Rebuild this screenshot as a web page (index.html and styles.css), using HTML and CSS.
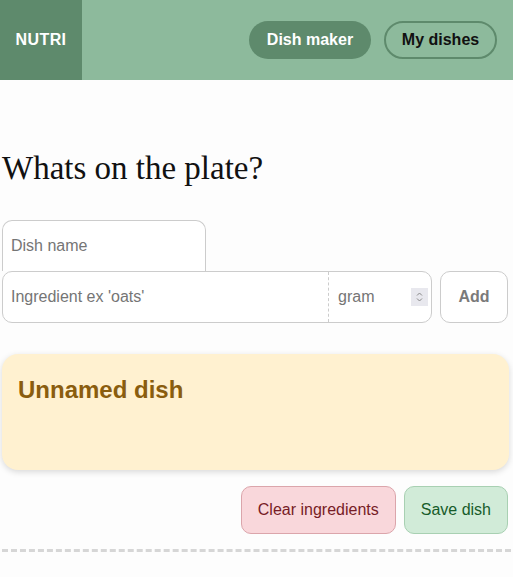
FILE: index.html
```html
<!DOCTYPE html>
<html>
<head>
<meta charset="utf-8">
<link rel="stylesheet" href="styles.css">
</head>
<body>
<header class="topbar">
  <div class="logo">NUTRI</div>
  <nav class="nav">
    <a class="pill pill-active">Dish maker</a>
    <a class="pill pill-outline">My dishes</a>
  </nav>
</header>
<main class="main">
  <h1 class="title">Whats on the plate?</h1>
  <form class="form">
    <input class="dish-name" type="text" placeholder="Dish name">
    <div class="ingredient-row">
      <div class="ingredient-box">
        <input class="ingredient" type="text" placeholder="Ingredient ex 'oats'">
        <div class="unit">
          <span class="unit-text">gram</span>
          <span class="spinner">
            <svg width="11" height="14" viewBox="0 0 11 14"><path d="M3 5.5 L5.5 3 L8 5.5" fill="none" stroke="#888" stroke-width="1"/><path d="M3 8.5 L5.5 11 L8 8.5" fill="none" stroke="#888" stroke-width="1"/></svg>
          </span>
        </div>
      </div>
      <button class="add" type="button">Add</button>
    </div>
  </form>
  <section class="card">
    <h2 class="card-title">Unnamed dish</h2>
  </section>
  <div class="actions">
    <button class="btn btn-clear" type="button">Clear ingredients</button>
    <button class="btn btn-save" type="button">Save dish</button>
  </div>
  <hr class="divider">
</main>
</body>
</html>
```
FILE: styles.css
```css
* { box-sizing: border-box; }
html, body { margin: 0; padding: 0; background: #fdfdfd; }
body { font-family: "Liberation Sans", Arial, sans-serif; color: #111; }

.topbar {
  height: 80px;
  background: #8dba9c;
  display: flex;
  align-items: center;
}
.logo {
  width: 82px;
  height: 80px;
  background: #5e8a6c;
  color: #fff;
  font-weight: bold;
  font-size: 16px;
  display: flex;
  align-items: center;
  justify-content: center;
  letter-spacing: 0.4px;
}
.nav {
  margin-left: auto;
  margin-right: 16px;
  display: flex;
  gap: 13px;
}
.pill {
  height: 38px;
  display: flex;
  align-items: center;
  justify-content: center;
  border-radius: 19px;
  font-weight: bold;
  font-size: 16px;
}
.pill-active {
  width: 122px;
  background: #5e8a6c;
  color: #fff;
}
.pill-outline {
  width: 113px;
  border: 2px solid #5e8a6c;
  color: #111;
}

.main {
  padding: 0 5px 0 2px;
}
.title {
  margin: 68px 0 34px;
  font-family: "Liberation Serif", "Times New Roman", serif;
  font-weight: normal;
  font-size: 33px;
  line-height: 40px;
  color: #111;
  height: 38px;
}
.form { display: flex; flex-direction: column; }
.dish-name {
  width: 204px;
  height: 51px;
  border: 1px solid #ccc;
  border-bottom: none;
  border-radius: 10px 10px 0 0;
  padding: 0 8px;
  font-family: inherit;
  font-size: 16px;
  background: #fff;
  outline: none;
  margin-top: 0;
}
.ingredient-row {
  display: flex;
  gap: 8px;
}
.ingredient-box {
  width: 430px;
  height: 52px;
  display: flex;
  border: 1px solid #ccc;
  border-radius: 10px;
  background: #fff;
}
.ingredient {
  flex: 1;
  border: none;
  border-right: 1px dashed #ccc;
  background: transparent;
  padding: 0 8px;
  font-family: inherit;
  font-size: 16px;
  outline: none;
  border-radius: 10px 0 0 10px;
  min-width: 0;
}
.unit {
  width: 102px;
  display: flex;
  align-items: center;
  padding: 0 3px 0 9px;
}
.unit-text { color: #757575; font-size: 16px; flex: 1; }
.spinner {
  width: 17px;
  height: 18px;
  background: #e8e8ee;
  display: flex;
  align-items: center;
  justify-content: center;
}
input::placeholder { color: #757575; }
.add {
  width: 68px;
  height: 52px;
  border: 1px solid #ccc;
  border-radius: 10px;
  background: #fff;
  font-family: inherit;
  font-weight: bold;
  font-size: 16px;
  color: #7a7a7a;
}

.card {
  margin-top: 31px;
  height: 116px;
  background: #fff1d0;
  border-radius: 16px;
  box-shadow: 0 2px 6px rgba(0,0,0,0.15);
  padding: 21px 16px;
  width: 507px;
}
.card-title {
  margin: 0;
  font-size: 24px;
  line-height: 30px;
  color: #8a5d0e;
}

.actions {
  margin-top: 16px;
  display: flex;
  justify-content: flex-end;
  gap: 8px;
}
.btn {
  height: 48px;
  border-radius: 10px;
  font-family: inherit;
  font-size: 16px;
  padding: 0 16px;
  white-space: nowrap;
}
.btn-clear {
  background: #f9d7db;
  border: 1px solid #dba5ab;
  color: #771c26;
}
.btn-save {
  background: #d1ebd8;
  border: 1px solid #a8d0b2;
  color: #175c2a;
}
.divider {
  margin: 15px 0 0;
  border: none;
  border-top: 3px dashed #d6d6d6;
  height: 0;
  width: 509px;
}
```
